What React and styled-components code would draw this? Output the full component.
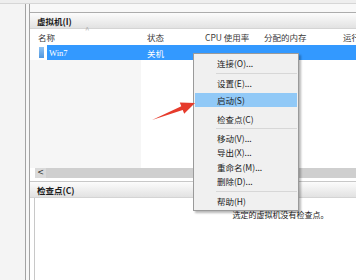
import React from "react";
import styled, { createGlobalStyle } from "styled-components";

const GlobalStyle = createGlobalStyle`
  html, body {
    margin: 0;
    padding: 0;
    background: #f3f3f3;
  }
  body {
    font-family: "Noto Sans CJK SC", "Noto Sans", sans-serif;
    font-size: 8.5px;
    color: #1e1e1e;
  }
`;

const Screen = styled.div`
  position: relative;
  width: 356px;
  height: 280px;
  overflow: hidden;
  display: flex;
  flex-direction: column;
  background: #f3f3f3;
`;

const TopStrip = styled.div`
  height: 3px;
  flex: none;
  background: #eeeeee;
  border-bottom: 1px solid #d6d6d6;
`;

const Main = styled.div`
  flex: 1;
  display: flex;
  min-height: 0;
`;

const Gutter = styled.div`
  width: ${(p) => p.$w}px;
  flex: none;
  background: ${(p) => p.$bg};
  border-right: 1px solid #a3a3a3;
`;

const Content = styled.div`
  width: 500px;
  flex: none;
  display: flex;
  flex-direction: column;
  background: #f8f8f8;
  padding-top: 8px;
`;

const Panel = styled.div`
  flex: 1;
  display: flex;
  flex-direction: column;
  background: #fff;
  border-top: 1px solid #acacac;
`;

const PaneHeader = styled.div`
  height: 15px;
  flex: none;
  display: flex;
  align-items: center;
  padding-left: 7px;
  font-weight: bold;
  color: #1a1a1a;
  background: linear-gradient(#fcfcfc, #e2e2e2);
  border-top: ${(p) => (p.$top ? "1px solid #c8c8c8" : "none")};
  border-bottom: 1px solid #d4d4d4;
`;

const ColumnRow = styled.div`
  height: 15px;
  flex: none;
  display: grid;
  grid-template-columns: 111px 58px 59px 79px 1fr;
  align-items: center;
  background: #fff;
  color: #3a3a3a;
  margin-bottom: 1px;
`;

const ColHead = styled.div`
  position: relative;
  padding-left: ${(p) => (p.$first ? 8 : 6)}px;
  white-space: nowrap;
`;

const SortMark = styled.span`
  position: absolute;
  left: 55px;
  top: -7px;
  color: #b0b0b0;
  font-size: 8px;
`;

const VmRow = styled.div`
  height: 15px;
  flex: none;
  display: grid;
  grid-template-columns: 111px 58px 1fr;
  align-items: center;
`;

const NameCell = styled.div`
  display: flex;
  align-items: center;
  height: 100%;
  padding-left: 9px;
  gap: 3px;
`;

const VmIcon = styled.div`
  width: 5px;
  height: 11px;
  background: linear-gradient(#8fc2f2, #4f97e0);
`;

const Selected = styled.div`
  flex: 1;
  height: 100%;
  display: flex;
  align-items: center;
  padding-left: 2px;
  background: #3399ff;
  color: #fff;
  font-family: "Liberation Serif", serif;
  font-size: 8.5px;
`;

const Cell = styled.div`
  height: 100%;
  display: flex;
  align-items: center;
  padding-left: 6px;
  background: #3399ff;
  color: #fff;
`;

const ListBody = styled.div`
  height: 108px;
  flex: none;
  display: grid;
  grid-template-columns: 111px 1fr;
`;

const SortedShade = styled.div`
  background: ${(p) => (p.$shade ? "#f6f6f6" : "#fff")};
`;

const HScroll = styled.div`
  height: 10px;
  flex: none;
  display: flex;
  background: #cfcfcf;
  margin-left: 5px;
`;

const ScrollBtn = styled.div`
  width: 11px;
  display: flex;
  align-items: center;
  justify-content: center;
  background: #dadada;
  color: #333;
  font-family: "DejaVu Sans", sans-serif;
  font-size: 8px;
  line-height: 1;
`;

const Gap = styled.div`
  height: 3px;
  flex: none;
  background: #fff;
`;

const CheckBody = styled.div`
  flex: 1;
  background: #fff;
  text-align: center;
  padding-top: 11px;
  font-size: 8px;
  color: #222;
  border-left: 1px solid #c8c8c8;
  margin-left: 4px;
  padding-right: 4px;
`;

const Menu = styled.div`
  position: absolute;
  left: 193px;
  top: 53px;
  width: 102px;
  padding: 2px 1px;
  background: #f0f0f0;
  border: 1px solid #9a9a9a;
  box-shadow: 2px 2px 2px rgba(0, 0, 0, 0.28);
`;

const MenuItem = styled.div`
  height: ${(p) => p.$h || 14.5}px;
  display: flex;
  align-items: center;
  padding-left: 22px;
  color: #1a1a1a;
  background: ${(p) => (p.$active ? "#91c9f7" : "transparent")};
  white-space: nowrap;
`;

const Separator = styled.div`
  height: ${(p) => p.$h || 5}px;
  display: flex;
  align-items: center;
  padding-left: 21px;
  &::after {
    content: "";
    flex: 1;
    height: 1px;
    background: ${(p) => (p.$hidden ? "transparent" : "#d7d7d7")};
  }
`;

const Arrow = styled.svg`
  position: absolute;
  left: 148px;
  top: 98px;
`;

export default function App() {
  return (
    <>
      <GlobalStyle />
      <Screen>
        <TopStrip />
        <Main>
          <Gutter $w={25} $bg="#f4f4f4" />
          <Gutter $w={3} $bg="#f7f7f7" />
          <Content>
            <Panel>
              <PaneHeader>虚拟机(I)</PaneHeader>
              <ColumnRow>
                <ColHead $first>
                  名称<SortMark>^</SortMark>
                </ColHead>
                <ColHead>状态</ColHead>
                <ColHead>CPU 使用率</ColHead>
                <ColHead>分配的内存</ColHead>
                <ColHead>运行</ColHead>
              </ColumnRow>
              <VmRow>
                <NameCell>
                  <VmIcon />
                  <Selected>Win7</Selected>
                </NameCell>
                <Cell>关机</Cell>
                <Cell />
              </VmRow>
              <ListBody>
                <SortedShade $shade />
                <SortedShade />
              </ListBody>
              <HScroll>
                <ScrollBtn>&lt;</ScrollBtn>
              </HScroll>
              <Gap />
              <PaneHeader $top>检查点(C)</PaneHeader>
              <CheckBody>选定的虚拟机没有检查点。</CheckBody>
            </Panel>
          </Content>
        </Main>

        <Menu>
          <MenuItem>连接(O)...</MenuItem>
          <Separator />
          <MenuItem>设置(E)...</MenuItem>
          <Separator $h={3} $hidden />
          <MenuItem $active $h={14}>启动(S)</MenuItem>
          <Separator $h={5} $hidden />
          <MenuItem>检查点(C)</MenuItem>
          <Separator $h={4} />
          <MenuItem>移动(V)...</MenuItem>
          <MenuItem>导出(X)...</MenuItem>
          <MenuItem>重命名(M)...</MenuItem>
          <MenuItem>删除(D)...</MenuItem>
          <Separator />
          <MenuItem>帮助(H)</MenuItem>
        </Menu>

        <Arrow width="50" height="26" viewBox="0 0 50 26">
          <polygon
            points="4,22 34.7,12 36.2,15.7 47,5 31.8,4.5 33.3,8.2"
            fill="#e63b2c"
          />
        </Arrow>
      </Screen>
    </>
  );
}
